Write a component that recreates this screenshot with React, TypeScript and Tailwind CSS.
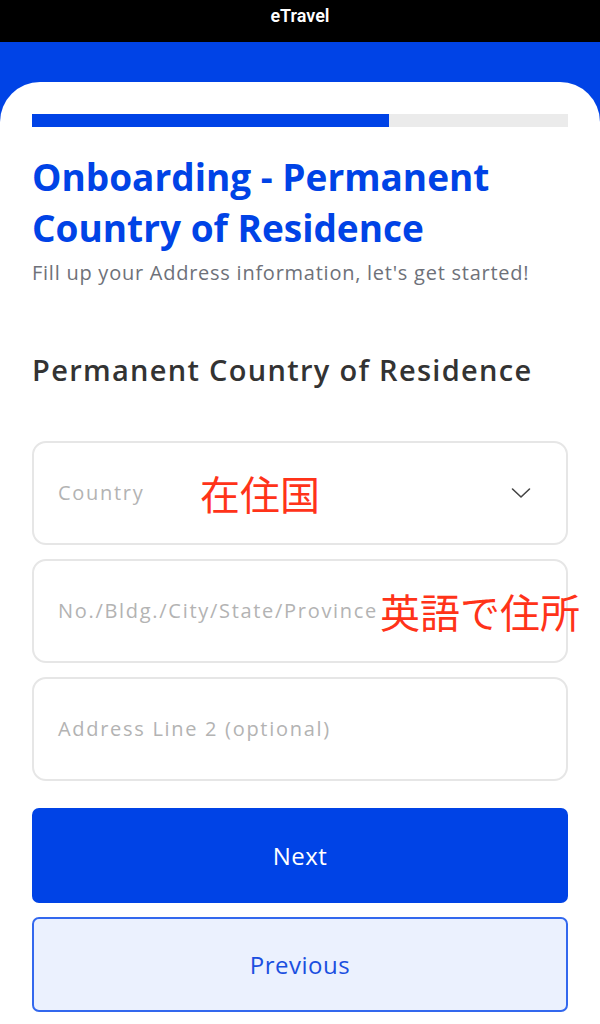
const font = { fontFamily: '"Open Sans", "Noto Sans", sans-serif' }

function Field({ placeholder, children }: { placeholder: string; children?: React.ReactNode }) {
  return (
    <div className="relative flex h-[104px] items-center rounded-[14px] border-2 border-[#e6e6e6] px-6">
      <span className="text-[20px] tracking-[1.7px] text-[#b3b3b3]">{placeholder}</span>
      {children}
    </div>
  )
}

function Note({ text, className }: { text: string; className: string }) {
  return (
    <span
      className={`absolute top-1/2 -translate-y-1/2 whitespace-nowrap text-[40px] leading-none text-[#ff3319] ${className}`}
      style={{ fontFamily: '"Noto Sans CJK JP", sans-serif' }}
    >
      {text}
    </span>
  )
}

export default function App() {
  return (
    <div className="h-[1024px] w-[600px] overflow-hidden bg-[#0043e6]" style={font}>
      {/* Status header */}
      <div className="flex h-[42px] justify-center bg-black pt-[5px]">
        <span className="text-[18px] font-semibold leading-[22px] text-white" style={{ fontFamily: 'Roboto, sans-serif' }}>eTravel</span>
      </div>

      <div className="pt-[40px]">
        <div className="h-[942px] rounded-t-[40px] bg-white px-8 pt-[32px]">
          {/* Progress */}
          <div className="h-[13px] w-full bg-[#ebebeb]">
            <div className="h-full w-[357px] bg-[#0043e6]" />
          </div>

          <h1 className="mt-[24px] text-[37px] font-bold leading-[51px] text-[#0043e6]">
            Onboarding - Permanent Country of Residence
          </h1>
          <p className="mt-[6px] text-[20px] tracking-[0.75px] leading-[28px] text-[#6e7179]">
            Fill up your Address information, let's get started!
          </p>

          <h2 className="mt-[65px] text-[29px] font-semibold tracking-[1.3px] leading-[36px] text-[#333333]">
            Permanent Country of Residence
          </h2>

          <div className="mt-[53px] flex flex-col gap-[14px]">
            <Field placeholder="Country">
              <Note text="在住国" className="left-[166px]" />
              <svg className="absolute right-[35px] top-1/2 -translate-y-1/2" width="20" height="11" viewBox="0 0 20 11" fill="none">
                <path d="M1.5 1.5 L10 9.5 L18.5 1.5" stroke="#444" strokeWidth="1.6" strokeLinecap="round" strokeLinejoin="round" />
              </svg>
            </Field>
            <Field placeholder="No./Bldg./City/State/Province">
              <Note text="英語で住所" className="left-[346px]" />
            </Field>
            <Field placeholder="Address Line 2 (optional)" />
          </div>

          <div className="mt-[27px] flex flex-col gap-[14px]">
            <button className="flex h-[95px] items-center justify-center rounded-[7px] bg-[#0043e6] text-[24px] tracking-[0.5px] text-white">
              Next
            </button>
            <button className="flex h-[95px] items-center justify-center rounded-[7px] border-2 border-[#3368ee] bg-[#ebf1fe] text-[24px] tracking-[0.5px] text-[#1a4fe0]">
              Previous
            </button>
          </div>
        </div>
      </div>
    </div>
  )
}
